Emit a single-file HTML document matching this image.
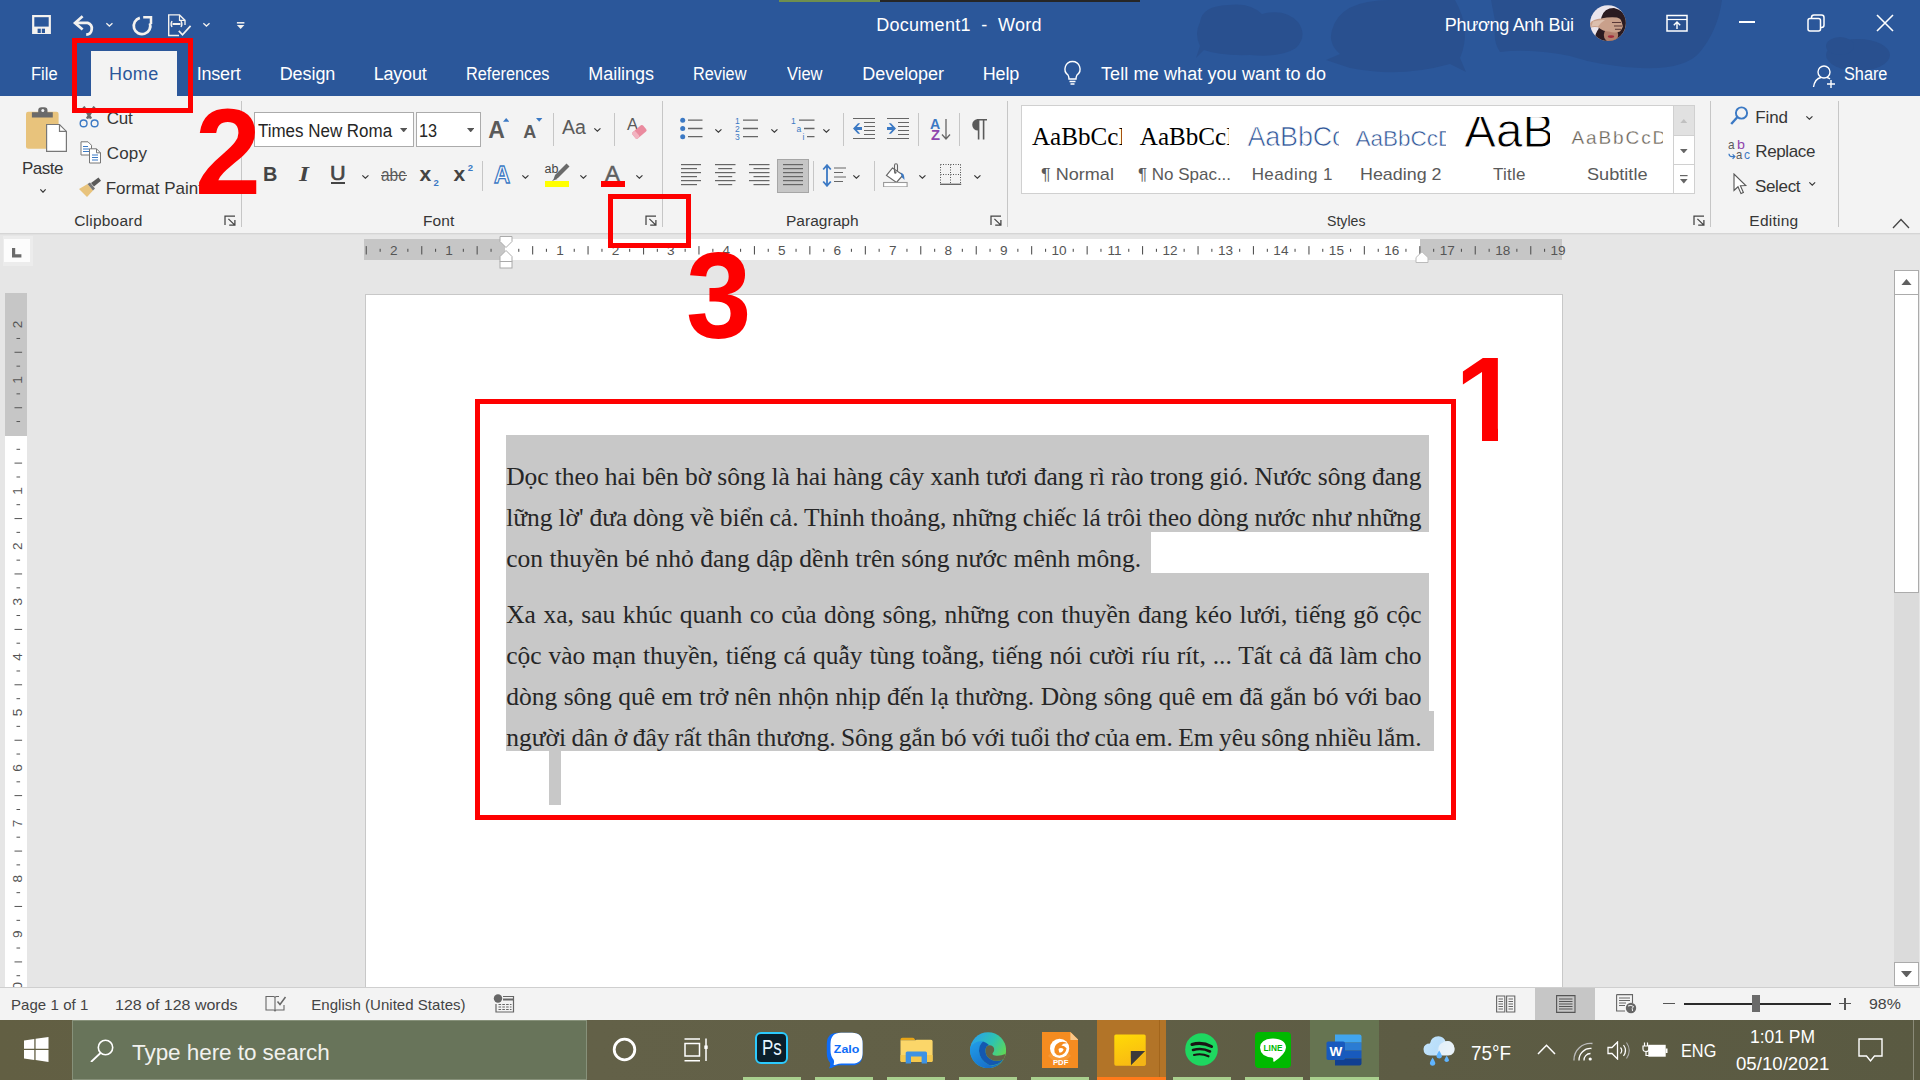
<!DOCTYPE html>
<html lang="vi"><head><meta charset="utf-8"><title>Document1 - Word</title><style>
html,body{margin:0;padding:0;}
body{width:1920px;height:1080px;overflow:hidden;position:relative;background:#e6e6e6;font-family:"Liberation Sans", sans-serif;}
.b{position:absolute;box-sizing:border-box;}
.t{position:absolute;white-space:pre;line-height:1;transform-origin:0 0;}
.p{position:absolute;white-space:pre;font-family:"Liberation Serif", serif;color:#262626;}
</style></head><body>
<!-- title bar --><div class="b" style="left:0.0px;top:0.0px;width:1920.0px;height:96.0px;background:#2b579a;"></div><svg class="b" style="left:1100.0px;top:0.0px;" width="820" height="96" viewBox="0 0 820 96"><g fill="#29508f">
<path d="M100 22 Q102 6 128 5 Q150 2 162 14 Q185 8 198 22 Q208 36 196 48 Q180 58 150 55 Q120 56 104 50 L96 58 L100 46 Q94 34 100 22Z"/>
<path d="M232 30 Q240 0 290 0 H355 Q372 30 360 58 L366 72 L350 64 Q300 78 250 68 L226 60 L240 54 Q228 44 232 30Z"/>
<path d="M391 0 H622 Q618 30 600 52 Q585 70 540 68 Q500 66 470 56 Q430 48 400 52 Q392 40 396 26Z"/>
<ellipse cx="758" cy="55" rx="32" ry="16"/><ellipse cx="740" cy="46" rx="14" ry="9"/></g></svg><div class="b" style="left:779.0px;top:0.0px;width:101.0px;height:2.0px;background:#6f8f4e;"></div><div class="b" style="left:880.0px;top:0.0px;width:260.0px;height:2.0px;background:#262626;"></div><svg class="b" style="left:31.0px;top:14.0px;" width="21" height="21" viewBox="0 0 21 21"><rect x="2.2" y="2.1" width="16.6" height="16.8" fill="none" stroke="#f4f2ef" stroke-width="2.2"/><rect x="2.2" y="12.6" width="16.6" height="6.3" fill="#f4f2ef"/><rect x="6.6" y="14.7" width="3.2" height="4.3" fill="#2b579a"/><rect x="10.8" y="14.7" width="3.2" height="4.3" fill="#2b579a"/></svg><svg class="b" style="left:72.0px;top:13.0px;" width="26" height="24" viewBox="0 0 26 24"><path d="M10.6 3.2 L3 9.9 L10.6 16.6" fill="none" stroke="#f4f2ef" stroke-width="2.7"/><path d="M3.8 9.9 H15.6 A6 6 0 0 1 14.2 21.6" fill="none" stroke="#f4f2ef" stroke-width="2.7"/></svg><svg class="b" style="left:105.3px;top:22.0px;" width="8.8" height="5.4" viewBox="0 0 8.8 5.4"><path d="M1.35 1.35 L4.40 4.05 L7.45 1.35" fill="none" stroke="#f4f2ef" stroke-width="1.3"/></svg><svg class="b" style="left:130.0px;top:13.0px;" width="24" height="24" viewBox="0 0 24 24"><path d="M9.85 4.9 A8.3 8.3 0 1 0 19.9 10.2" fill="none" stroke="#f4f2ef" stroke-width="2.7"/><path d="M13.2 4.2 H21 V11" fill="none" stroke="#f4f2ef" stroke-width="2.5"/></svg><svg class="b" style="left:167.0px;top:13.0px;" width="26" height="24" viewBox="0 0 26 24"><path d="M12 22.5 H1.7 V1.9 H12.5 L18 7.4 V12" fill="none" stroke="#f4f2ef" stroke-width="1.4"/><path d="M12.5 1.9 V7.4 H18" fill="none" stroke="#f4f2ef" stroke-width="1.2"/><path d="M5.5 11 H13.5" stroke="#f4f2ef" stroke-width="2"/><path d="M5 8 Q3.2 11 5 14 M14 8 Q15.8 11 14 14" stroke="#f4f2ef" stroke-width="1.4" fill="none"/><path d="M11.8 17.9 L15.5 21.8 L23.6 12.9" fill="none" stroke="#f4f2ef" stroke-width="1.7"/></svg><svg class="b" style="left:201.5px;top:22.0px;" width="8.9" height="5.4" viewBox="0 0 8.9 5.4"><path d="M1.35 1.35 L4.45 4.05 L7.55 1.35" fill="none" stroke="#f4f2ef" stroke-width="1.3"/></svg><svg class="b" style="left:236.0px;top:21.0px;" width="10" height="10" viewBox="0 0 10 10"><path d="M0.9 1.8H8.4" stroke="#f4f2ef" stroke-width="1.5"/><path d="M0.9 4 H8.4 L4.65 8Z" fill="#f4f2ef"/></svg><span class="t" id="t0" style="left:876.3px;top:16.0px;font-size:18.0px;color:#fff;letter-spacing:0.26px;">Document1  -  Word</span><span class="t" id="t1" style="left:1444.7px;top:15.7px;font-size:18.0px;color:#fff;letter-spacing:-0.28px;">Phương Anh Bùi</span><svg class="b" style="left:1589.9px;top:4.9px;" width="36" height="36.2" viewBox="0 0 36 36.2"><defs><clipPath id="av"><circle cx="18" cy="18.1" r="17.9"/></clipPath></defs>
<g clip-path="url(#av)"><rect width="36" height="37" fill="#ebe5ec"/>
<path d="M11.5 12 Q14 3 24 3 Q37 6 37 20 Q37 32 28 37 H5 Q4 30 8.5 24 Q10.5 16 11.5 12Z" fill="#2b1b21"/>
<ellipse cx="21" cy="30" rx="7.2" ry="7.5" fill="#b3806d"/><ellipse cx="21" cy="31.6" rx="3.2" ry="1.3" fill="#a32b3c"/>
<path d="M0 18 Q3 14.5 11 13.6 Q20 11.5 27 12.5 Q31 13.5 31.5 16.5 L33 21.5 Q32 24 30 26.5 Q25 28.5 19 26.5 Q13 26.5 8 22.3 Q3 21.5 0 23Z" fill="#c9a08b"/>
<path d="M3 16.5 Q9 14.5 15 15 Q10 18 8 21.5 Q4 20.5 1 22Z" fill="#dcbfae"/>
<path d="M22 17.5 H31 M24 21 H32.5 M25 24.3 H31" stroke="#4a2a2c" stroke-width="0.9" fill="none"/></g></svg><svg class="b" style="left:1666.0px;top:14.0px;" width="22" height="18" viewBox="0 0 22 18"><rect x="1" y="1.5" width="20" height="15.5" fill="none" stroke="#fff" stroke-width="1.5"/><path d="M1 5.5H21" stroke="#fff" stroke-width="1.2"/><path d="M11 15V8.5 M7.8 11.3 L11 8 L14.2 11.3" fill="none" stroke="#fff" stroke-width="1.4"/></svg><div class="b" style="left:1739.0px;top:21.3px;width:16.0px;height:1.6px;background:#fff;"></div><svg class="b" style="left:1807.0px;top:14.0px;" width="18" height="18" viewBox="0 0 18 18"><rect x="1" y="4.5" width="12.5" height="12.5" rx="2" fill="none" stroke="#fff" stroke-width="1.5"/><path d="M4.5 4.5 V3.5 Q4.5 1 7 1 H14.5 Q17 1 17 3.5 V11 Q17 13.5 14.5 13.5 H13.5" fill="none" stroke="#fff" stroke-width="1.5"/></svg><svg class="b" style="left:1876.0px;top:14.0px;" width="18" height="18" viewBox="0 0 18 18"><path d="M1 1 L17 17 M17 1 L1 17" stroke="#fff" stroke-width="1.6"/></svg><!-- tabs --><div class="b" style="left:91.0px;top:51.0px;width:86.0px;height:46.0px;background:#f3f3f3;"></div><span class="t" id="t2" style="left:30.8px;top:65.0px;font-size:18.0px;color:#fff;transform:scaleX(0.915);">File</span><span class="t" id="t3" style="left:109.0px;top:65.0px;font-size:18.0px;color:#2b579a;letter-spacing:0.43px;">Home</span><span class="t" id="t4" style="left:196.7px;top:65.0px;font-size:18.0px;color:#fff;letter-spacing:-0.20px;">Insert</span><span class="t" id="t5" style="left:279.7px;top:65.0px;font-size:18.0px;color:#fff;letter-spacing:-0.08px;">Design</span><span class="t" id="t6" style="left:373.7px;top:65.0px;font-size:18.0px;color:#fff;letter-spacing:-0.21px;">Layout</span><span class="t" id="t7" style="left:465.8px;top:65.0px;font-size:18.0px;color:#fff;transform:scaleX(0.907);">References</span><span class="t" id="t8" style="left:588.3px;top:65.0px;font-size:18.0px;color:#fff;letter-spacing:-0.05px;">Mailings</span><span class="t" id="t9" style="left:693.4px;top:65.0px;font-size:18.0px;color:#fff;transform:scaleX(0.905);">Review</span><span class="t" id="t10" style="left:787.3px;top:65.0px;font-size:18.0px;color:#fff;transform:scaleX(0.917);">View</span><span class="t" id="t11" style="left:862.3px;top:65.0px;font-size:18.0px;color:#fff;letter-spacing:-0.04px;">Developer</span><span class="t" id="t12" style="left:982.7px;top:65.0px;font-size:18.0px;color:#fff;letter-spacing:-0.14px;">Help</span><svg class="b" style="left:1062.0px;top:60.0px;" width="21" height="26" viewBox="0 0 21 26"><path d="M10.5 1.5 A7.5 7.5 0 0 1 15 15 Q14 17 14 19 H7 Q7 17 6 15 A7.5 7.5 0 0 1 10.5 1.5Z" fill="none" stroke="#fff" stroke-width="1.4"/><path d="M7.5 21.5H13.5 M8.5 24H12.5" stroke="#fff" stroke-width="1.3"/></svg><span class="t" id="t13" style="left:1101.0px;top:65.0px;font-size:18.0px;color:#fff;letter-spacing:0.11px;">Tell me what you want to do</span><svg class="b" style="left:1812.0px;top:64.0px;" width="26" height="24" viewBox="0 0 26 24"><circle cx="12" cy="8" r="6" fill="none" stroke="#fff" stroke-width="1.4"/><path d="M1.5 23 Q3 14.5 9 13.5 M15 13.5 Q17 14 18 15" fill="none" stroke="#fff" stroke-width="1.4"/><path d="M19 16V24 M15 20H23" stroke="#fff" stroke-width="1.4"/></svg><span class="t" id="t14" style="left:1844.3px;top:65.0px;font-size:18.0px;color:#fff;transform:scaleX(0.904);">Share</span><!-- ribbon --><div class="b" style="left:0.0px;top:96.0px;width:1920.0px;height:137.0px;background:#f3f3f3;"></div><div class="b" style="left:0.0px;top:233.0px;width:1920.0px;height:1.0px;background:#d5d5d5;"></div><div class="b" style="left:0.0px;top:234.0px;width:1920.0px;height:1.0px;background:#e0e0e0;"></div><svg class="b" style="left:25.0px;top:106.0px;" width="43" height="47" viewBox="0 0 43 47"><rect x="1" y="5.7" width="32.6" height="37" rx="2.2" fill="#e8c37c"/>
<path d="M6.9 6.2 H13.2 V4.6 A3.3 3.3 0 0 1 16.5 1.3 H19.2 A3.3 3.3 0 0 1 22.5 4.6 V6.2 H27.8 V11.6 H6.9Z" fill="#6a6a6a"/><circle cx="17.8" cy="4.5" r="1.5" fill="#f3f3f3"/>
<path d="M21.6 18.5 H34.5 L41.4 25.4 V45.3 H21.6Z" fill="#fff" stroke="#777" stroke-width="1.2"/><path d="M34.5 18.5 V25.4 H41.4" fill="none" stroke="#777" stroke-width="1.2"/></svg><span class="t" id="t15" style="left:22.0px;top:159.5px;font-size:17.0px;color:#363636;letter-spacing:-0.50px;">Paste</span><svg class="b" style="left:39.0px;top:187.8px;" width="8" height="5.6" viewBox="0 0 8 5.6"><path d="M1.35 1.35 L4.00 4.25 L6.65 1.35" fill="none" stroke="#363636" stroke-width="1.15"/></svg><svg class="b" style="left:78.0px;top:104.0px;" width="22" height="24" viewBox="0 0 22 24"><path d="M5.6 2.6 L13 14.6 M16.4 2.6 L9 14.6" stroke="#6a6a6a" stroke-width="2.6"/>
<circle cx="5.6" cy="19.4" r="3.4" fill="none" stroke="#3b79c4" stroke-width="1.4"/><circle cx="16.6" cy="19.4" r="3.4" fill="none" stroke="#3b79c4" stroke-width="1.4"/></svg><span class="t" id="t16" style="left:106.7px;top:110.3px;font-size:17.0px;color:#363636;letter-spacing:-0.22px;">Cut</span><svg class="b" style="left:79.5px;top:141.0px;" width="22" height="23" viewBox="0 0 22 23"><path d="M1 0.8 H8 L11.5 4.3 V14 H1Z" fill="#fff" stroke="#777" stroke-width="1"/><path d="M3 5.5H8 M3 8H9.5 M3 10.5H9.5" stroke="#3b79c4" stroke-width="1"/>
<path d="M9.5 7.8 H16.5 L20.5 11.8 V22 H9.5Z" fill="#fff" stroke="#777" stroke-width="1"/><path d="M16.5 7.8V11.8H20.5" fill="none" stroke="#777" stroke-width="1"/><path d="M12 14H18 M12 16.5H18 M12 19H18" stroke="#3b79c4" stroke-width="1"/></svg><span class="t" id="t17" style="left:106.7px;top:145.3px;font-size:17.0px;color:#363636;letter-spacing:0.20px;">Copy</span><svg class="b" style="left:78.0px;top:176.0px;" width="24" height="22" viewBox="0 0 24 22"><path d="M1 13 L9.5 8 L15 14.5 L9 21 Z" fill="#e8c37c"/><path d="M9.5 8 L15 14.5 L17 12.5 L12 6.5Z" fill="#777"/><path d="M13 7 L20.5 1.5 L23 4.8 L16 10.5Z" fill="#5a5a5a"/></svg><span class="t" id="t18" style="left:105.7px;top:180.3px;font-size:17.0px;color:#363636;">Format Painter</span><span class="t" id="t19" style="left:74.2px;top:213.0px;font-size:15.5px;color:#363636;letter-spacing:0.22px;">Clipboard</span><svg class="b" style="left:223.8px;top:215.4px;" width="12" height="11.5" viewBox="0 0 12 11.5"><path d="M1 10 V1.1 H11 M4.4 3.9 L10.6 9.9 M5.2 10 H10.9 V5" fill="none" stroke="#444" stroke-width="1.25"/></svg><div class="b" style="left:241.0px;top:101.0px;width:1.0px;height:126.0px;background:#c6c6c6;"></div><div class="b" style="left:254.0px;top:112.0px;width:159.5px;height:34.5px;background:#fff;border:1px solid #ababab;"></div><span class="t" id="t20" style="left:257.9px;top:122.2px;font-size:18.0px;color:#262626;transform:scaleX(0.942);">Times New Roma</span><svg class="b" style="left:400.0px;top:128.0px;" width="7.4" height="4.4" viewBox="0 0 7.4 4.4"><path d="M0 0H7.4L3.7 4.4Z" fill="#555"/></svg><div class="b" style="left:416.0px;top:112.0px;width:64.7px;height:34.5px;background:#fff;border:1px solid #ababab;"></div><span class="t" id="t21" style="left:419.4px;top:122.2px;font-size:18.0px;color:#262626;transform:scaleX(0.905);">13</span><svg class="b" style="left:466.6px;top:128.0px;" width="7.4" height="4.4" viewBox="0 0 7.4 4.4"><path d="M0 0H7.4L3.7 4.4Z" fill="#555"/></svg><span class="t" id="t22" style="left:488.3px;top:118.7px;font-size:23.0px;color:#5a5a5a;font-weight:700;-webkit-text-stroke:0;">A</span><svg class="b" style="left:502.6px;top:117.8px;" width="6.4" height="3.8" viewBox="0 0 6.4 3.8"><path d="M0 3.8H6.4L3.2 0Z" fill="#3b79c4"/></svg><span class="t" id="t23" style="left:523.3px;top:122.7px;font-size:18.0px;color:#5a5a5a;font-weight:700;">A</span><svg class="b" style="left:536.2px;top:117.8px;" width="6.4" height="3.8" viewBox="0 0 6.4 3.8"><path d="M0 0H6.4L3.2 3.8Z" fill="#3b79c4"/></svg><div class="b" style="left:553.0px;top:113.0px;width:1.0px;height:33.0px;background:#c6c6c6;"></div><span class="t" id="t24" style="left:562.0px;top:118.3px;font-size:19.5px;color:#5a5a5a;">Aa</span><svg class="b" style="left:592.6px;top:127.0px;" width="8.8" height="5.6" viewBox="0 0 8.8 5.6"><path d="M1.35 1.35 L4.40 4.25 L7.45 1.35" fill="none" stroke="#363636" stroke-width="1.15"/></svg><div class="b" style="left:614.0px;top:113.0px;width:1.0px;height:33.0px;background:#c6c6c6;"></div><span class="t" id="t25" style="left:627.0px;top:116.4px;font-size:16.5px;color:#5a5a5a;">A</span><svg class="b" style="left:630.0px;top:123.0px;" width="18" height="17" viewBox="0 0 18 17"><g transform="rotate(-40 9 8.5)"><rect x="2" y="5" width="14" height="8" rx="1.6" fill="#ea8a9e"/><rect x="2" y="5" width="4.5" height="8" rx="1.6" fill="#f2b3c0"/></g></svg><span class="t" id="t26" style="left:262.7px;top:164.2px;font-size:20.5px;color:#444;font-weight:700;transform:scaleX(0.969);">B</span><span class="t" id="t27" style="left:298.5px;top:164.2px;font-size:21.5px;color:#444;font-family:'Liberation Serif',serif;font-weight:700;font-style:italic;transform:scaleX(1.190);">I</span><span class="t" id="t28" style="left:329.9px;top:164.2px;font-size:19.5px;color:#444;transform:scaleX(1.108);-webkit-text-stroke:0.6px #444;">U</span><div class="b" style="left:330.8px;top:182.4px;width:13.8px;height:1.9px;background:#444;"></div><svg class="b" style="left:360.5px;top:173.6px;" width="8.8" height="5.6" viewBox="0 0 8.8 5.6"><path d="M1.35 1.35 L4.40 4.25 L7.45 1.35" fill="none" stroke="#363636" stroke-width="1.15"/></svg><span class="t" id="t29" style="left:381.2px;top:167.0px;font-size:17.5px;color:#5a5a5a;transform:scaleX(0.882);">abc</span><div class="b" style="left:380.5px;top:175.2px;width:26.5px;height:1.2px;background:#5a5a5a;"></div><span class="t" id="t30" style="left:419.6px;top:163.2px;font-size:21.0px;color:#444;font-weight:700;">x</span><span class="t" id="t31" style="left:433.4px;top:177.6px;font-size:9.5px;color:#3b79c4;font-weight:700;">2</span><span class="t" id="t32" style="left:453.6px;top:163.2px;font-size:21.0px;color:#444;font-weight:700;">x</span><span class="t" id="t33" style="left:467.8px;top:162.6px;font-size:9.5px;color:#3b79c4;font-weight:700;">2</span><div class="b" style="left:482.0px;top:161.0px;width:1.0px;height:30.0px;background:#c6c6c6;"></div><span class="t" id="t34" style="left:494.3px;top:162.6px;font-size:24.5px;color:#fbfbfb;transform:scaleX(0.911);-webkit-text-stroke:1.3px #3b79c4;font-weight:700;">A</span><svg class="b" style="left:521.3px;top:173.6px;" width="8.8" height="5.6" viewBox="0 0 8.8 5.6"><path d="M1.35 1.35 L4.40 4.25 L7.45 1.35" fill="none" stroke="#363636" stroke-width="1.15"/></svg><span class="t" id="t35" style="left:544.5px;top:162.5px;font-size:12.5px;color:#444;">ab</span><svg class="b" style="left:548.0px;top:160.0px;" width="22" height="22" viewBox="0 0 22 22"><path d="M18.5 3.5 L21.5 6.5 L10 18 L5.5 19.5 L7 15Z" fill="#6a6a6a"/><path d="M4 21 L7.5 17 L9.5 19Z" fill="#6a6a6a"/></svg><div class="b" style="left:544.8px;top:181.0px;width:24.2px;height:5.9px;background:#ffff00;"></div><svg class="b" style="left:579.3px;top:173.6px;" width="8.8" height="5.6" viewBox="0 0 8.8 5.6"><path d="M1.35 1.35 L4.40 4.25 L7.45 1.35" fill="none" stroke="#363636" stroke-width="1.15"/></svg><span class="t" id="t36" style="left:605.0px;top:163.2px;font-size:22.5px;color:#5f5f5f;transform:scaleX(0.987);-webkit-text-stroke:0.5px #5f5f5f;">A</span><div class="b" style="left:600.9px;top:181.0px;width:24.1px;height:5.9px;background:#ff0000;"></div><svg class="b" style="left:635.4px;top:173.6px;" width="8.8" height="5.6" viewBox="0 0 8.8 5.6"><path d="M1.35 1.35 L4.40 4.25 L7.45 1.35" fill="none" stroke="#363636" stroke-width="1.15"/></svg><span class="t" id="t37" style="left:423.0px;top:213.2px;font-size:15.5px;color:#363636;letter-spacing:0.10px;">Font</span><svg class="b" style="left:644.5px;top:215.4px;" width="12" height="11.5" viewBox="0 0 12 11.5"><path d="M1 10 V1.1 H11 M4.4 3.9 L10.6 9.9 M5.2 10 H10.9 V5" fill="none" stroke="#444" stroke-width="1.25"/></svg><div class="b" style="left:662.0px;top:101.0px;width:1.0px;height:126.0px;background:#c6c6c6;"></div><svg class="b" style="left:679.5px;top:117.0px;" width="23" height="23" viewBox="0 0 23 23"><circle cx="2.7" cy="3.2" r="2.5" fill="#3b79c4"/><circle cx="2.7" cy="11.5" r="2.5" fill="#3b79c4"/><circle cx="2.7" cy="19.7" r="2.5" fill="#3b79c4"/>
<path d="M8 3.2H22.5 M8 11.5H22.5 M8 19.7H22.5" stroke="#666" stroke-width="1.3"/></svg><svg class="b" style="left:713.6px;top:127.8px;" width="8.8" height="5.6" viewBox="0 0 8.8 5.6"><path d="M1.35 1.35 L4.40 4.25 L7.45 1.35" fill="none" stroke="#363636" stroke-width="1.15"/></svg><svg class="b" style="left:735.0px;top:116.0px;" width="24" height="25" viewBox="0 0 24 25"><text x="0" y="7.5" font-size="8.5" font-family="Liberation Sans, sans-serif" fill="#3b79c4">1</text><text x="0" y="16" font-size="8.5" font-family="Liberation Sans, sans-serif" fill="#3b79c4">2</text><text x="0" y="24.3" font-size="8.5" font-family="Liberation Sans, sans-serif" fill="#3b79c4">3</text>
<path d="M8 4.2H23 M8 12.5H23 M8 20.7H23" stroke="#666" stroke-width="1.3"/></svg><svg class="b" style="left:769.7px;top:127.8px;" width="8.8" height="5.6" viewBox="0 0 8.8 5.6"><path d="M1.35 1.35 L4.40 4.25 L7.45 1.35" fill="none" stroke="#363636" stroke-width="1.15"/></svg><svg class="b" style="left:790.5px;top:116.0px;" width="25" height="25" viewBox="0 0 25 25"><text x="0" y="7.5" font-size="8.5" font-family="Liberation Sans, sans-serif" fill="#3b79c4">1</text><text x="5.5" y="16" font-size="8.5" font-family="Liberation Sans, sans-serif" fill="#3b79c4">a</text><text x="11.5" y="24.3" font-size="8.5" font-family="Liberation Sans, sans-serif" fill="#3b79c4">i</text>
<path d="M8 4.2H23.5 M13 12.5H23.5 M16 20.7H23.5" stroke="#666" stroke-width="1.3"/></svg><svg class="b" style="left:821.7px;top:127.8px;" width="8.8" height="5.6" viewBox="0 0 8.8 5.6"><path d="M1.35 1.35 L4.40 4.25 L7.45 1.35" fill="none" stroke="#363636" stroke-width="1.15"/></svg><div class="b" style="left:843.0px;top:113.0px;width:1.0px;height:33.0px;background:#c6c6c6;"></div><svg class="b" style="left:853.0px;top:118.0px;" width="23" height="21" viewBox="0 0 23 21"><path d="M0 0.5H22 M11 4.5H22 M11 8.5H22 M11 12.5H22 M11 16.5H22 M0 20.5H22" stroke="#666" stroke-width="1"/>
<path d="M0 10.5 L5 5.2 H7.2 L3.9 9 H9 V12 H3.9 L7.2 15.8 H5Z" fill="#3b79c4"/></svg><svg class="b" style="left:887.0px;top:118.0px;" width="23" height="21" viewBox="0 0 23 21"><path d="M0 0.5H22 M11 4.5H22 M11 8.5H22 M11 12.5H22 M11 16.5H22 M0 20.5H22" stroke="#666" stroke-width="1"/>
<path d="M9 10.5 L4 5.2 H1.8 L5.1 9 H0 V12 H5.1 L1.8 15.8 H4Z" fill="#3b79c4"/></svg><div class="b" style="left:918.0px;top:113.0px;width:1.0px;height:33.0px;background:#c6c6c6;"></div><span class="t" id="t38" style="left:930.2px;top:116.5px;font-size:14.4px;color:#3b79c4;font-weight:700;transform:scaleX(0.982);">A</span><span class="t" id="t39" style="left:931.0px;top:127.6px;font-size:14.4px;color:#8e44ad;font-weight:700;transform:scaleX(1.022);">Z</span><svg class="b" style="left:941.0px;top:118.5px;" width="10" height="21.5" viewBox="0 0 10 21.5"><path d="M5 0V20 M1 15.5 L5 20 L9 15.5" fill="none" stroke="#666" stroke-width="1.3"/></svg><div class="b" style="left:959.0px;top:113.0px;width:1.0px;height:33.0px;background:#c6c6c6;"></div><svg class="b" style="left:969.5px;top:118.5px;" width="17.5" height="21" viewBox="0 0 17.5 21"><path d="M8 0 A5.8 5.8 0 0 0 8 11.6 Z" fill="#5a5a5a"/><path d="M7 0.8H17 M8.6 0.8V20.5 M13.6 0.8V20.5" stroke="#5a5a5a" stroke-width="1.6" fill="none"/></svg><svg class="b" style="left:680.7px;top:164.0px;" width="20.5" height="24" viewBox="0 0 20.5 24"><rect x="0.0" y="0.0" width="20.5" height="1.2" fill="#666"/><rect x="0.0" y="4.0" width="16.0" height="1.2" fill="#666"/><rect x="0.0" y="8.0" width="20.5" height="1.2" fill="#666"/><rect x="0.0" y="12.0" width="16.0" height="1.2" fill="#666"/><rect x="0.0" y="16.0" width="20.5" height="1.2" fill="#666"/><rect x="0.0" y="20.0" width="16.0" height="1.2" fill="#666"/></svg><svg class="b" style="left:715.0px;top:164.0px;" width="20.5" height="24" viewBox="0 0 20.5 24"><rect x="0.0" y="0.0" width="20.5" height="1.2" fill="#666"/><rect x="3.2" y="4.0" width="14.0" height="1.2" fill="#666"/><rect x="0.0" y="8.0" width="20.5" height="1.2" fill="#666"/><rect x="3.2" y="12.0" width="14.0" height="1.2" fill="#666"/><rect x="0.0" y="16.0" width="20.5" height="1.2" fill="#666"/><rect x="3.2" y="20.0" width="14.0" height="1.2" fill="#666"/></svg><svg class="b" style="left:749.0px;top:164.0px;" width="20.5" height="24" viewBox="0 0 20.5 24"><rect x="0.0" y="0.0" width="20.5" height="1.2" fill="#666"/><rect x="4.5" y="4.0" width="16.0" height="1.2" fill="#666"/><rect x="0.0" y="8.0" width="20.5" height="1.2" fill="#666"/><rect x="4.5" y="12.0" width="16.0" height="1.2" fill="#666"/><rect x="0.0" y="16.0" width="20.5" height="1.2" fill="#666"/><rect x="4.5" y="20.0" width="16.0" height="1.2" fill="#666"/></svg><div class="b" style="left:777.0px;top:159.0px;width:32.0px;height:34.0px;background:#c6c6c6;border:1px solid #a6a6a6;"></div><svg class="b" style="left:782.6px;top:164.0px;" width="20.7" height="24" viewBox="0 0 20.7 24"><rect x="0.0" y="0.0" width="20.7" height="1.2" fill="#666"/><rect x="0.0" y="4.0" width="20.7" height="1.2" fill="#666"/><rect x="0.0" y="8.0" width="20.7" height="1.2" fill="#666"/><rect x="0.0" y="12.0" width="20.7" height="1.2" fill="#666"/><rect x="0.0" y="16.0" width="20.7" height="1.2" fill="#666"/><rect x="0.0" y="20.0" width="20.7" height="1.2" fill="#666"/></svg><div class="b" style="left:813.0px;top:161.0px;width:1.0px;height:30.0px;background:#c6c6c6;"></div><svg class="b" style="left:821.5px;top:163.5px;" width="25" height="23" viewBox="0 0 25 23"><path d="M5 1.5V21.5 M1.2 5.5 L5 1.2 L8.8 5.5 M1.2 17.5 L5 21.8 L8.8 17.5" fill="none" stroke="#3b79c4" stroke-width="1.8"/>
<path d="M12 4H24 M12 8.5H21 M12 13H24 M12 17.5H21" stroke="#666" stroke-width="1.2"/></svg><svg class="b" style="left:852.4px;top:173.6px;" width="8.8" height="5.6" viewBox="0 0 8.8 5.6"><path d="M1.35 1.35 L4.40 4.25 L7.45 1.35" fill="none" stroke="#363636" stroke-width="1.15"/></svg><div class="b" style="left:874.0px;top:161.0px;width:1.0px;height:30.0px;background:#c6c6c6;"></div><svg class="b" style="left:883.0px;top:162.5px;" width="25" height="24.5" viewBox="0 0 25 24.5"><path d="M9.5 5 L20 12 L13.5 19.5 L3.5 12.5Z" fill="#fff" stroke="#666" stroke-width="1.2"/><path d="M11.5 9 V2.5 Q11.5 0.8 13 0.8 Q14.5 0.8 14.5 2.5 V8" fill="none" stroke="#666" stroke-width="1.1"/><circle cx="12.3" cy="9.5" r="1.2" fill="#666"/>
<path d="M17.5 9.5 Q21.5 10 21.5 17 Q20 15 19 14.5Z" fill="#3b79c4"/><rect x="0.6" y="19.5" width="23.5" height="4.4" fill="#fff" stroke="#999" stroke-width="1.1"/></svg><svg class="b" style="left:917.5px;top:173.6px;" width="8.8" height="5.6" viewBox="0 0 8.8 5.6"><path d="M1.35 1.35 L4.40 4.25 L7.45 1.35" fill="none" stroke="#363636" stroke-width="1.15"/></svg><svg class="b" style="left:940.0px;top:164.0px;" width="22" height="21.5" viewBox="0 0 22 21.5"><path d="M0.5 0.5H21 M0.5 10.5H21 M0.5 0.5V20 M10.5 0.5V20 M20.5 0.5V20" fill="none" stroke="#555" stroke-width="1" stroke-dasharray="1 1.5"/><path d="M0 20.3H21.2" stroke="#666" stroke-width="1.4"/></svg><svg class="b" style="left:973.4px;top:173.6px;" width="8.8" height="5.6" viewBox="0 0 8.8 5.6"><path d="M1.35 1.35 L4.40 4.25 L7.45 1.35" fill="none" stroke="#363636" stroke-width="1.15"/></svg><span class="t" id="t40" style="left:786.0px;top:213.0px;font-size:15.5px;color:#363636;letter-spacing:0.03px;">Paragraph</span><svg class="b" style="left:989.7px;top:215.4px;" width="12" height="11.5" viewBox="0 0 12 11.5"><path d="M1 10 V1.1 H11 M4.4 3.9 L10.6 9.9 M5.2 10 H10.9 V5" fill="none" stroke="#444" stroke-width="1.25"/></svg><div class="b" style="left:1007.0px;top:101.0px;width:1.0px;height:126.0px;background:#c6c6c6;"></div><div class="b" style="left:1021.3px;top:104.5px;width:673.5px;height:89.8px;background:#fff;border:1px solid #d0d0d0;"></div><div class="b" style="left:1028px;top:110px;width:93.5px;height:50px;overflow:hidden;"><span class="t" id="t41" style="left:4.0px;top:13.6px;font-size:25.1px;color:#000;font-family:'Liberation Serif',serif;">AaBbCcDd</span></div><div class="b" style="left:1135.8px;top:110px;width:93.5px;height:50px;overflow:hidden;"><span class="t" id="t42" style="left:4.0px;top:13.6px;font-size:25.1px;color:#000;font-family:'Liberation Serif',serif;">AaBbCcDd</span></div><span class="t" id="t43" style="left:1040.6px;top:166.1px;font-size:17.0px;color:#5a5a5a;transform:scaleX(1.062);">¶ Normal</span><span class="t" id="t44" style="left:1138.0px;top:166.1px;font-size:17.0px;color:#5a5a5a;letter-spacing:-0.02px;">¶ No Spac...</span><div class="b" style="left:1246px;top:110px;width:92.5px;height:50px;overflow:hidden;"><span class="t" id="t45" style="left:1.5px;top:14.0px;font-size:27.0px;color:#2f5597;letter-spacing:-0.2px;-webkit-text-stroke:0.7px #fff;">AaBbCcD</span></div><span class="t" id="t46" style="left:1251.7px;top:166.1px;font-size:17.0px;color:#5a5a5a;letter-spacing:0.41px;">Heading 1</span><div class="b" style="left:1354px;top:110px;width:92px;height:50px;overflow:hidden;"><span class="t" id="t47" style="left:1.5px;top:18.0px;font-size:22.5px;color:#2f5597;-webkit-text-stroke:0.5px #fff;">AaBbCcDd</span></div><span class="t" id="t48" style="left:1359.9px;top:166.1px;font-size:17.0px;color:#5a5a5a;transform:scaleX(1.052);">Heading 2</span><div class="b" style="left:1460px;top:116.5px;width:89.5px;height:40px;overflow:hidden;"><span class="t" id="t49" style="left:4.3px;top:-9.2px;font-size:47.5px;color:#000;-webkit-text-stroke:0.9px #fff;">AaBb</span></div><span class="t" id="t50" style="left:1493.0px;top:165.8px;font-size:17.0px;color:#5a5a5a;letter-spacing:0.24px;">Title</span><div class="b" style="left:1568px;top:110px;width:95px;height:50px;overflow:hidden;"><span class="t" id="t51" style="left:3.5px;top:17.5px;font-size:19.0px;color:#6a6358;letter-spacing:1.9px;-webkit-text-stroke:0.3px #fff;">AaBbCcDd</span></div><span class="t" id="t52" style="left:1587.0px;top:165.8px;font-size:17.0px;color:#5a5a5a;transform:scaleX(1.067);">Subtitle</span><div class="b" style="left:1672.5px;top:104.5px;width:22.3px;height:31.5px;background:#e1e1e1;border:1px solid #d0d0d0;"></div><div class="b" style="left:1672.5px;top:135.0px;width:22.3px;height:30.0px;background:#fff;border:1px solid #d0d0d0;"></div><div class="b" style="left:1672.5px;top:164.0px;width:22.3px;height:30.3px;background:#fff;border:1px solid #d0d0d0;"></div><svg class="b" style="left:1680.0px;top:118.5px;" width="7.6" height="4.4" viewBox="0 0 7.6 4.4"><path d="M0 4.4H7.6L3.8 0Z" fill="#c0c0c0"/></svg><svg class="b" style="left:1680.0px;top:148.5px;" width="7.6" height="4.4" viewBox="0 0 7.6 4.4"><path d="M0 0H7.6L3.8 4.4Z" fill="#666"/></svg><svg class="b" style="left:1680.0px;top:174.5px;" width="7.6" height="9" viewBox="0 0 7.6 9"><path d="M0 0.6H7.6" stroke="#666" stroke-width="1.2"/><path d="M0 4H7.6L3.8 8.4Z" fill="#666"/></svg><span class="t" id="t53" style="left:1327.3px;top:213.0px;font-size:15.5px;color:#363636;transform:scaleX(0.911);">Styles</span><svg class="b" style="left:1692.5px;top:215.4px;" width="12" height="11.5" viewBox="0 0 12 11.5"><path d="M1 10 V1.1 H11 M4.4 3.9 L10.6 9.9 M5.2 10 H10.9 V5" fill="none" stroke="#444" stroke-width="1.25"/></svg><div class="b" style="left:1710.0px;top:101.0px;width:1.0px;height:126.0px;background:#c6c6c6;"></div><svg class="b" style="left:1729.5px;top:105.5px;" width="19" height="20" viewBox="0 0 19 20"><circle cx="11.5" cy="7" r="5.6" fill="none" stroke="#3b79c4" stroke-width="1.9"/><path d="M7.5 11 L1.2 18" stroke="#3b79c4" stroke-width="2.4"/></svg><span class="t" id="t54" style="left:1755.3px;top:109.0px;font-size:17.0px;color:#363636;letter-spacing:-0.14px;">Find</span><svg class="b" style="left:1804.5px;top:114.6px;" width="8.8" height="5.6" viewBox="0 0 8.8 5.6"><path d="M1.35 1.35 L4.40 4.25 L7.45 1.35" fill="none" stroke="#363636" stroke-width="1.15"/></svg><span class="t" id="t55" style="left:1728.0px;top:138.1px;font-size:13.5px;color:#5a5a5a;transform:scaleX(0.875);">a</span><span class="t" id="t56" style="left:1737.0px;top:138.1px;font-size:13.5px;color:#8e44ad;transform:scaleX(1.057);">b</span><span class="t" id="t57" style="left:1736.3px;top:148.3px;font-size:13.5px;color:#5a5a5a;transform:scaleX(0.838);">a</span><span class="t" id="t58" style="left:1744.0px;top:148.3px;font-size:13.5px;color:#3b79c4;transform:scaleX(0.886);">c</span><svg class="b" style="left:1727.5px;top:152.5px;" width="8" height="7" viewBox="0 0 8 7"><path d="M1 0.8 Q1 3.6 4 3.6 H6.6 M4.6 1.3 L6.9 3.6 L4.6 5.9" fill="none" stroke="#3b79c4" stroke-width="1.2"/></svg><span class="t" id="t59" style="left:1755.3px;top:143.3px;font-size:17.0px;color:#363636;letter-spacing:-0.37px;">Replace</span><svg class="b" style="left:1732.5px;top:173.0px;" width="15" height="22" viewBox="0 0 15 22"><path d="M1 1 V17.5 L5 13.8 L8 20.6 L10.4 19.5 L7.4 12.8 L12.8 12.5Z" fill="#fff" stroke="#555" stroke-width="1.1"/></svg><span class="t" id="t60" style="left:1755.0px;top:177.5px;font-size:17.0px;color:#363636;letter-spacing:-0.34px;">Select</span><svg class="b" style="left:1808.3px;top:181.4px;" width="8.5" height="5.6" viewBox="0 0 8.5 5.6"><path d="M1.35 1.35 L4.25 4.25 L7.15 1.35" fill="none" stroke="#363636" stroke-width="1.15"/></svg><span class="t" id="t61" style="left:1749.3px;top:213.0px;font-size:15.5px;color:#363636;letter-spacing:0.24px;">Editing</span><div class="b" style="left:1838.0px;top:101.0px;width:1.0px;height:126.0px;background:#c6c6c6;"></div><svg class="b" style="left:1892.0px;top:218.0px;" width="18" height="11" viewBox="0 0 18 11"><path d="M1 10 L9 1.5 L17 10" fill="none" stroke="#444" stroke-width="1.3"/></svg><!-- document area --><div class="b" style="left:0.0px;top:234.7px;width:1920.0px;height:753.0px;background:#e6e6e6;"></div><div class="b" style="left:2.5px;top:235.5px;width:30.5px;height:30.0px;background:#ececec;"></div><div class="b" style="left:4.0px;top:239.0px;width:25.5px;height:23.0px;background:#fcfcfc;"></div><svg class="b" style="left:11.5px;top:248.0px;" width="10" height="10" viewBox="0 0 10 10"><path d="M0 0H3.2V6.2H9.4V9.4H0Z" fill="#6a6a6a"/></svg><div class="b" style="left:364.0px;top:239.0px;width:1198.0px;height:21.0px;background:#fff;"></div><div class="b" style="left:364.0px;top:239.0px;width:141.0px;height:21.0px;background:#c6c6c6;"></div><div class="b" style="left:1420.0px;top:239.0px;width:142.0px;height:21.0px;background:#c6c6c6;"></div><svg class="b" style="left:364.0px;top:239.0px;font-family:Liberation Sans,sans-serif;overflow:visible;" width="1198" height="21" viewBox="0 0 1198 21"><rect x="1.7" y="7.1" width="1.1" height="8.4" fill="#555"/><rect x="15.6" y="9.8" width="1.1" height="3" fill="#555"/><text x="29.7" y="15.9" font-size="13.6" text-anchor="middle" fill="#555">2</text><rect x="43.3" y="9.8" width="1.1" height="3" fill="#555"/><rect x="57.2" y="7.1" width="1.1" height="8.4" fill="#555"/><rect x="71.0" y="9.8" width="1.1" height="3" fill="#555"/><text x="85.1" y="15.9" font-size="13.6" text-anchor="middle" fill="#555">1</text><rect x="98.8" y="9.8" width="1.1" height="3" fill="#555"/><rect x="112.6" y="7.1" width="1.1" height="8.4" fill="#555"/><rect x="126.5" y="9.8" width="1.1" height="3" fill="#555"/><rect x="154.2" y="9.8" width="1.1" height="3" fill="#555"/><rect x="168.1" y="7.1" width="1.1" height="8.4" fill="#555"/><rect x="181.9" y="9.8" width="1.1" height="3" fill="#555"/><text x="196.1" y="15.9" font-size="13.6" text-anchor="middle" fill="#555">1</text><rect x="209.7" y="9.8" width="1.1" height="3" fill="#555"/><rect x="223.5" y="7.1" width="1.1" height="8.4" fill="#555"/><rect x="237.4" y="9.8" width="1.1" height="3" fill="#555"/><text x="251.5" y="15.9" font-size="13.6" text-anchor="middle" fill="#555">2</text><rect x="265.1" y="9.8" width="1.1" height="3" fill="#555"/><rect x="279.0" y="7.1" width="1.1" height="8.4" fill="#555"/><rect x="292.8" y="9.8" width="1.1" height="3" fill="#555"/><text x="306.9" y="15.9" font-size="13.6" text-anchor="middle" fill="#555">3</text><rect x="320.6" y="9.8" width="1.1" height="3" fill="#555"/><rect x="334.4" y="7.1" width="1.1" height="8.4" fill="#555"/><rect x="348.3" y="9.8" width="1.1" height="3" fill="#555"/><text x="362.4" y="15.9" font-size="13.6" text-anchor="middle" fill="#555">4</text><rect x="376.0" y="9.8" width="1.1" height="3" fill="#555"/><rect x="389.9" y="7.1" width="1.1" height="8.4" fill="#555"/><rect x="403.7" y="9.8" width="1.1" height="3" fill="#555"/><text x="417.8" y="15.9" font-size="13.6" text-anchor="middle" fill="#555">5</text><rect x="431.5" y="9.8" width="1.1" height="3" fill="#555"/><rect x="445.3" y="7.1" width="1.1" height="8.4" fill="#555"/><rect x="459.2" y="9.8" width="1.1" height="3" fill="#555"/><text x="473.3" y="15.9" font-size="13.6" text-anchor="middle" fill="#555">6</text><rect x="486.9" y="9.8" width="1.1" height="3" fill="#555"/><rect x="500.8" y="7.1" width="1.1" height="8.4" fill="#555"/><rect x="514.6" y="9.8" width="1.1" height="3" fill="#555"/><text x="528.8" y="15.9" font-size="13.6" text-anchor="middle" fill="#555">7</text><rect x="542.4" y="9.8" width="1.1" height="3" fill="#555"/><rect x="556.2" y="7.1" width="1.1" height="8.4" fill="#555"/><rect x="570.1" y="9.8" width="1.1" height="3" fill="#555"/><text x="584.2" y="15.9" font-size="13.6" text-anchor="middle" fill="#555">8</text><rect x="597.8" y="9.8" width="1.1" height="3" fill="#555"/><rect x="611.7" y="7.1" width="1.1" height="8.4" fill="#555"/><rect x="625.5" y="9.8" width="1.1" height="3" fill="#555"/><text x="639.7" y="15.9" font-size="13.6" text-anchor="middle" fill="#555">9</text><rect x="653.3" y="9.8" width="1.1" height="3" fill="#555"/><rect x="667.1" y="7.1" width="1.1" height="8.4" fill="#555"/><rect x="681.0" y="9.8" width="1.1" height="3" fill="#555"/><text x="695.1" y="15.9" font-size="13.6" text-anchor="middle" fill="#555">10</text><rect x="708.7" y="9.8" width="1.1" height="3" fill="#555"/><rect x="722.6" y="7.1" width="1.1" height="8.4" fill="#555"/><rect x="736.4" y="9.8" width="1.1" height="3" fill="#555"/><text x="750.5" y="15.9" font-size="13.6" text-anchor="middle" fill="#555">11</text><rect x="764.2" y="9.8" width="1.1" height="3" fill="#555"/><rect x="778.0" y="7.1" width="1.1" height="8.4" fill="#555"/><rect x="791.9" y="9.8" width="1.1" height="3" fill="#555"/><text x="806.0" y="15.9" font-size="13.6" text-anchor="middle" fill="#555">12</text><rect x="819.6" y="9.8" width="1.1" height="3" fill="#555"/><rect x="833.5" y="7.1" width="1.1" height="8.4" fill="#555"/><rect x="847.3" y="9.8" width="1.1" height="3" fill="#555"/><text x="861.5" y="15.9" font-size="13.6" text-anchor="middle" fill="#555">13</text><rect x="875.1" y="9.8" width="1.1" height="3" fill="#555"/><rect x="888.9" y="7.1" width="1.1" height="8.4" fill="#555"/><rect x="902.8" y="9.8" width="1.1" height="3" fill="#555"/><text x="916.9" y="15.9" font-size="13.6" text-anchor="middle" fill="#555">14</text><rect x="930.5" y="9.8" width="1.1" height="3" fill="#555"/><rect x="944.4" y="7.1" width="1.1" height="8.4" fill="#555"/><rect x="958.2" y="9.8" width="1.1" height="3" fill="#555"/><text x="972.4" y="15.9" font-size="13.6" text-anchor="middle" fill="#555">15</text><rect x="986.0" y="9.8" width="1.1" height="3" fill="#555"/><rect x="999.8" y="7.1" width="1.1" height="8.4" fill="#555"/><rect x="1013.7" y="9.8" width="1.1" height="3" fill="#555"/><text x="1027.8" y="15.9" font-size="13.6" text-anchor="middle" fill="#555">16</text><rect x="1041.4" y="9.8" width="1.1" height="3" fill="#555"/><rect x="1055.3" y="7.1" width="1.1" height="8.4" fill="#555"/><rect x="1069.1" y="9.8" width="1.1" height="3" fill="#555"/><text x="1083.3" y="15.9" font-size="13.6" text-anchor="middle" fill="#555">17</text><rect x="1096.9" y="9.8" width="1.1" height="3" fill="#555"/><rect x="1110.7" y="7.1" width="1.1" height="8.4" fill="#555"/><rect x="1124.6" y="9.8" width="1.1" height="3" fill="#555"/><text x="1138.7" y="15.9" font-size="13.6" text-anchor="middle" fill="#555">18</text><rect x="1152.3" y="9.8" width="1.1" height="3" fill="#555"/><rect x="1166.2" y="7.1" width="1.1" height="8.4" fill="#555"/><rect x="1180.0" y="9.8" width="1.1" height="3" fill="#555"/><text x="1194.1" y="15.9" font-size="13.6" text-anchor="middle" fill="#555">19</text></svg><svg class="b" style="left:498.5px;top:236.0px;" width="14" height="33" viewBox="0 0 14 33"><path d="M1 0.5H13V5.5L7 11.5L1 5.5Z" fill="#fff" stroke="#aaa" stroke-width="1"/>
<path d="M7 14.5 L13 20.5 V25.5 H1 V20.5Z" fill="#fff" stroke="#aaa" stroke-width="1"/><rect x="1" y="25.5" width="12" height="6.5" fill="#fff" stroke="#aaa" stroke-width="1"/></svg><svg class="b" style="left:1414.6px;top:251.3px;" width="14" height="12" viewBox="0 0 14 12"><path d="M7 0.8 L13 6.5 V11.5 H1 V6.5Z" fill="#fff" stroke="#bbb" stroke-width="1"/></svg><div class="b" style="left:365.0px;top:294.0px;width:1198.0px;height:694.0px;background:#fff;border:1px solid #c8c8c8;border-bottom:none;"></div><div class="b" style="left:5.0px;top:293.0px;width:21.7px;height:695.0px;background:#fff;"></div><div class="b" style="left:5.0px;top:293.0px;width:21.7px;height:143.0px;background:#c6c6c6;"></div><svg class="b" style="left:5.0px;top:293.0px;font-family:Liberation Sans,sans-serif;" width="21.7" height="695" viewBox="0 0 21.7 695"><text transform="translate(17.0 31.4) rotate(-90)" x="0" y="0" font-size="13.6" text-anchor="middle" fill="#555">2</text><rect x="11.5" y="44.8" width="3.6" height="1" fill="#555"/><rect x="9.5" y="58.6" width="7.6" height="1" fill="#555"/><rect x="11.5" y="72.5" width="3.6" height="1" fill="#555"/><text transform="translate(17.0 86.9) rotate(-90)" x="0" y="0" font-size="13.6" text-anchor="middle" fill="#555">1</text><rect x="11.5" y="100.2" width="3.6" height="1" fill="#555"/><rect x="9.5" y="114.1" width="7.6" height="1" fill="#555"/><rect x="11.5" y="127.9" width="3.6" height="1" fill="#555"/><rect x="11.5" y="155.7" width="3.6" height="1" fill="#555"/><rect x="9.5" y="169.5" width="7.6" height="1" fill="#555"/><rect x="11.5" y="183.4" width="3.6" height="1" fill="#555"/><text transform="translate(17.0 197.8) rotate(-90)" x="0" y="0" font-size="13.6" text-anchor="middle" fill="#555">1</text><rect x="11.5" y="211.1" width="3.6" height="1" fill="#555"/><rect x="9.5" y="225.0" width="7.6" height="1" fill="#555"/><rect x="11.5" y="238.8" width="3.6" height="1" fill="#555"/><text transform="translate(17.0 253.2) rotate(-90)" x="0" y="0" font-size="13.6" text-anchor="middle" fill="#555">2</text><rect x="11.5" y="266.6" width="3.6" height="1" fill="#555"/><rect x="9.5" y="280.4" width="7.6" height="1" fill="#555"/><rect x="11.5" y="294.3" width="3.6" height="1" fill="#555"/><text transform="translate(17.0 308.7) rotate(-90)" x="0" y="0" font-size="13.6" text-anchor="middle" fill="#555">3</text><rect x="11.5" y="322.0" width="3.6" height="1" fill="#555"/><rect x="9.5" y="335.9" width="7.6" height="1" fill="#555"/><rect x="11.5" y="349.7" width="3.6" height="1" fill="#555"/><text transform="translate(17.0 364.1) rotate(-90)" x="0" y="0" font-size="13.6" text-anchor="middle" fill="#555">4</text><rect x="11.5" y="377.5" width="3.6" height="1" fill="#555"/><rect x="9.5" y="391.3" width="7.6" height="1" fill="#555"/><rect x="11.5" y="405.2" width="3.6" height="1" fill="#555"/><text transform="translate(17.0 419.5) rotate(-90)" x="0" y="0" font-size="13.6" text-anchor="middle" fill="#555">5</text><rect x="11.5" y="432.9" width="3.6" height="1" fill="#555"/><rect x="9.5" y="446.8" width="7.6" height="1" fill="#555"/><rect x="11.5" y="460.6" width="3.6" height="1" fill="#555"/><text transform="translate(17.0 475.0) rotate(-90)" x="0" y="0" font-size="13.6" text-anchor="middle" fill="#555">6</text><rect x="11.5" y="488.4" width="3.6" height="1" fill="#555"/><rect x="9.5" y="502.2" width="7.6" height="1" fill="#555"/><rect x="11.5" y="516.1" width="3.6" height="1" fill="#555"/><text transform="translate(17.0 530.5) rotate(-90)" x="0" y="0" font-size="13.6" text-anchor="middle" fill="#555">7</text><rect x="11.5" y="543.8" width="3.6" height="1" fill="#555"/><rect x="9.5" y="557.7" width="7.6" height="1" fill="#555"/><rect x="11.5" y="571.5" width="3.6" height="1" fill="#555"/><text transform="translate(17.0 585.9) rotate(-90)" x="0" y="0" font-size="13.6" text-anchor="middle" fill="#555">8</text><rect x="11.5" y="599.3" width="3.6" height="1" fill="#555"/><rect x="9.5" y="613.1" width="7.6" height="1" fill="#555"/><rect x="11.5" y="627.0" width="3.6" height="1" fill="#555"/><text transform="translate(17.0 641.4) rotate(-90)" x="0" y="0" font-size="13.6" text-anchor="middle" fill="#555">9</text><rect x="11.5" y="654.7" width="3.6" height="1" fill="#555"/><rect x="9.5" y="668.6" width="7.6" height="1" fill="#555"/><rect x="11.5" y="682.4" width="3.6" height="1" fill="#555"/><text transform="translate(17.0 696.8) rotate(-90)" x="0" y="0" font-size="13.6" text-anchor="middle" fill="#555">10</text></svg><div class="b" style="left:506.2px;top:435.0px;width:922.8px;height:97.0px;background:#c8c8c8;"></div><div class="b" style="left:506.2px;top:531.5px;width:644.8px;height:42.0px;background:#c8c8c8;"></div><div class="b" style="left:506.2px;top:573.0px;width:922.8px;height:138.5px;background:#c8c8c8;"></div><div class="b" style="left:506.2px;top:711.0px;width:927.8px;height:40.0px;background:#c8c8c8;"></div><div class="b" style="left:549.0px;top:751.0px;width:12.0px;height:54.0px;background:#c8c8c8;"></div><div class="p" id="p0" style="left:506.2px;top:456.4px;font-size:25.50px;line-height:41px;height:41px;word-spacing:-0.280px;">Dọc theo hai bên bờ sông là hai hàng cây xanh tươi đang rì rào trong gió. Nước sông đang</div><div class="p" id="p1" style="left:506.2px;top:497.4px;font-size:25.50px;line-height:41px;height:41px;word-spacing:-0.558px;">lững lờ&#x27; đưa dòng về biển cả. Thỉnh thoảng, những chiếc lá trôi theo dòng nước như những</div><div class="p" id="p2" style="left:506.2px;top:538.4px;font-size:25.50px;line-height:41px;height:41px;">con thuyền bé nhỏ đang dập dềnh trên sóng nước mênh mông.</div><div class="p" id="p3" style="left:506.2px;top:594.4px;font-size:25.50px;line-height:41px;height:41px;word-spacing:1.106px;">Xa xa, sau khúc quanh co của dòng sông, những con thuyền đang kéo lưới, tiếng gõ cộc</div><div class="p" id="p4" style="left:506.2px;top:635.4px;font-size:25.50px;line-height:41px;height:41px;word-spacing:0.514px;">cộc vào mạn thuyền, tiếng cá quẫy tùng toẵng, tiếng nói cười ríu rít, ... Tất cả đã làm cho</div><div class="p" id="p5" style="left:506.2px;top:676.4px;font-size:25.50px;line-height:41px;height:41px;word-spacing:0.070px;">dòng sông quê em trở nên nhộn nhịp đến lạ thường. Dòng sông quê em đã gắn bó với bao</div><div class="p" id="p6" style="left:506.2px;top:717.4px;font-size:25.50px;line-height:41px;height:41px;word-spacing:-0.958px;">người dân ở đây rất thân thương. Sông gắn bó với tuổi thơ của em. Em yêu sông nhiều lắm.</div><div class="b" style="left:1894.0px;top:270.0px;width:25.0px;height:717.5px;background:#dbdbdb;"></div><div class="b" style="left:1894.0px;top:270.0px;width:25.0px;height:24.7px;background:#fff;border:1px solid #ababab;"></div><svg class="b" style="left:1901.0px;top:278.5px;" width="11" height="6.5" viewBox="0 0 11 6.5"><path d="M0 6.5H11L5.5 0Z" fill="#606060"/></svg><div class="b" style="left:1894.0px;top:294.0px;width:25.0px;height:298.7px;background:#fff;border:1px solid #ababab;"></div><div class="b" style="left:1894.0px;top:961.5px;width:25.0px;height:24.5px;background:#fff;border:1px solid #ababab;"></div><svg class="b" style="left:1901.0px;top:970.5px;" width="11" height="6.5" viewBox="0 0 11 6.5"><path d="M0 0H11L5.5 6.5Z" fill="#606060"/></svg><div class="b" style="left:72.0px;top:38.0px;width:121.0px;height:74.5px;border:5px solid #fe0000;"></div><div class="b" style="left:608.1px;top:194.1px;width:82.6px;height:54.4px;border:5px solid #fe0000;"></div><div class="b" style="left:475.0px;top:399.2px;width:981.3px;height:420.8px;border:5px solid #fe0000;"></div><span class="t" id="t62" style="left:194.9px;top:91.0px;font-size:122.0px;color:#fe0000;font-weight:700;transform:scaleX(0.973);">2</span><span class="t" id="t63" style="left:686.2px;top:233.7px;font-size:123.2px;color:#fe0000;font-weight:700;transform:scaleX(0.954);">3</span><span class="t" id="t64" style="left:1455.1px;top:338.8px;font-size:121.0px;color:#fe0000;font-weight:700;transform:scaleX(0.956);">1</span><div class="b" style="left:1458.0px;top:428.3px;width:24.2px;height:14.0px;background:#fff;"></div><div class="b" style="left:1497.8px;top:428.3px;width:21.0px;height:14.0px;background:#fff;"></div><!-- status bar --><div class="b" style="left:0.0px;top:987.0px;width:1920.0px;height:33.0px;background:#f3f3f3;border-top:1px solid #cfcfcf;"></div><span class="t" id="t65" style="left:11.0px;top:996.6px;font-size:15.0px;color:#444;letter-spacing:0.06px;">Page 1 of 1</span><span class="t" id="t66" style="left:115.4px;top:996.6px;font-size:15.0px;color:#444;transform:scaleX(1.065);">128 of 128 words</span><svg class="b" style="left:265.0px;top:995.0px;" width="22" height="18" viewBox="0 0 22 18"><path d="M1 1.5H8.5Q10 1.5 10 3V16.5Q10 15 8.5 15H1Z M10 3Q10 1.5 11.5 1.5H14 M10 16.5Q10 15 11.5 15H19V10" fill="none" stroke="#666" stroke-width="1.1"/><path d="M12.5 6.5 L15 9.5 L20.5 2" fill="none" stroke="#666" stroke-width="1.5"/></svg><span class="t" id="t67" style="left:311.3px;top:996.6px;font-size:15.0px;color:#444;letter-spacing:0.04px;">English (United States)</span><svg class="b" style="left:493.0px;top:994.0px;" width="22" height="19" viewBox="0 0 22 19"><circle cx="5" cy="4.5" r="4.2" fill="#666"/><path d="M10 2.5H20.5V18H3V10" fill="none" stroke="#666" stroke-width="1.2"/><path d="M10 5.5H20.5" stroke="#666" stroke-width="2"/><path d="M5.5 10.5H18.5 M5.5 13H18.5 M5.5 15.5H18.5" stroke="#666" stroke-width="1.1" stroke-dasharray="2.6 1.2"/></svg><svg class="b" style="left:1496.0px;top:995.0px;" width="19.5" height="18" viewBox="0 0 19.5 18"><path d="M0.6 1H8.8V17H0.6Z M10.6 1H18.8V17H10.6Z" fill="none" stroke="#666" stroke-width="1.1"/><path d="M2.5 4H7 M2.5 6.5H7 M2.5 9H7 M2.5 11.5H7 M2.5 14H7 M12.5 4H17 M12.5 6.5H17 M12.5 9H17 M12.5 11.5H17 M12.5 14H17" stroke="#666" stroke-width="1"/></svg><div class="b" style="left:1535.0px;top:988.0px;width:60.0px;height:32.0px;background:#c6c6c6;"></div><svg class="b" style="left:1555.5px;top:995.0px;" width="20" height="18" viewBox="0 0 20 18"><path d="M0.6 0.6H19V17.4H0.6Z" fill="none" stroke="#555" stroke-width="1.1"/><path d="M3 4H16.5 M3 6.5H16.5 M3 9H16.5 M3 11.5H16.5 M3 14H16.5" stroke="#555" stroke-width="1"/></svg><svg class="b" style="left:1616.0px;top:994.0px;" width="22" height="20" viewBox="0 0 22 20"><path d="M0.6 0.6H16.5V9 M0.6 0.6V17H9" fill="none" stroke="#666" stroke-width="1.1"/><path d="M3 4H14 M3 6.5H14 M3 9H10 M3 11.5H9" stroke="#666" stroke-width="1"/><circle cx="15" cy="14" r="5.2" fill="#666"/><path d="M12 12 Q15 10.5 17.5 12.5 Q15.5 14 16.5 17" fill="none" stroke="#f3f3f3" stroke-width="1"/></svg><div class="b" style="left:1662.5px;top:1003.0px;width:12.5px;height:1.3px;background:#555;"></div><div class="b" style="left:1683.5px;top:1002.6px;width:147.5px;height:2.0px;background:#2a2a2a;"></div><div class="b" style="left:1751.6px;top:994.6px;width:8.2px;height:17.4px;background:#6a6a6a;"></div><div class="b" style="left:1839.0px;top:1003.0px;width:12.0px;height:1.3px;background:#555;"></div><div class="b" style="left:1844.4px;top:997.5px;width:1.3px;height:12.0px;background:#555;"></div><span class="t" id="t68" style="left:1868.5px;top:996.3px;font-size:15.0px;color:#444;transform:scaleX(1.061);">98%</span><!-- taskbar --><div class="b" style="left:0.0px;top:1020.0px;width:1920.0px;height:60.0px;background:linear-gradient(90deg,#625f43 0,#636148 600px,#615f46 1100px,#5d5c44 1400px,#5a5a42 1920px);"></div><svg class="b" style="left:24.0px;top:1037.3px;" width="25" height="25" viewBox="0 0 25 25"><path d="M0 3.5 L10.3 2 V11.8 H0Z M11.6 1.8 L24.5 0 V11.8 H11.6Z M0 13.1 H10.3 V22.9 L0 21.4Z M11.6 13.1 H24.5 V24.9 L11.6 23.1Z" fill="#fff"/></svg><div class="b" style="left:72.3px;top:1020.3px;width:515.0px;height:59.7px;background:#68745a;border:1.6px solid #87917a;"></div><svg class="b" style="left:90.0px;top:1039.0px;" width="25" height="23" viewBox="0 0 25 23"><circle cx="15.5" cy="8.5" r="7.2" fill="none" stroke="#fff" stroke-width="1.6"/><path d="M10.5 14 L1 23" stroke="#fff" stroke-width="1.8"/></svg><span class="t" id="t69" style="left:132.0px;top:1042.0px;font-size:22.5px;color:#f1f1ee;letter-spacing:-0.06px;">Type here to search</span><svg class="b" style="left:611.5px;top:1037.3px;" width="25" height="25" viewBox="0 0 25 25"><circle cx="12.5" cy="12.5" r="10.3" fill="none" stroke="#fff" stroke-width="2.8"/></svg><svg class="b" style="left:683.5px;top:1037.5px;" width="25" height="24" viewBox="0 0 25 24"><path d="M1 5.5H15.5V18H1Z" fill="none" stroke="#fff" stroke-width="1.5"/><path d="M0.5 1H16 M0.5 22.8H16 M22 0.5V23" stroke="#fff" stroke-width="1.5"/><rect x="20.3" y="7.5" width="3.4" height="3.4" fill="#fff"/></svg><div class="b" style="left:742.9px;top:1077.2px;width:58.0px;height:3.0px;background:#a9d08e;"></div><div class="b" style="left:815.0px;top:1077.2px;width:58.0px;height:3.0px;background:#a9d08e;"></div><div class="b" style="left:886.9px;top:1077.2px;width:58.0px;height:3.0px;background:#a9d08e;"></div><div class="b" style="left:958.6px;top:1077.2px;width:58.0px;height:3.0px;background:#a9d08e;"></div><div class="b" style="left:1031.0px;top:1077.2px;width:58.0px;height:3.0px;background:#a9d08e;"></div><div class="b" style="left:1173.2px;top:1077.2px;width:58.0px;height:3.0px;background:#a9d08e;"></div><div class="b" style="left:1244.8px;top:1077.2px;width:58.0px;height:3.0px;background:#a9d08e;"></div><div class="b" style="left:755.0px;top:1032.3px;width:33.4px;height:31.8px;background:#0a1f2c;border:2.7px solid #2ccbff;border-radius:6px;"></div><span class="t" id="t70" style="left:762.1px;top:1038.3px;font-size:21.5px;color:#e6f5ff;transform:scaleX(0.788);">Ps</span><svg class="b" style="left:825.5px;top:1031.5px;" width="37.5" height="37" viewBox="0 0 37.5 37"><path d="M12 0.8 H26 Q36.6 0.8 36.6 11.5 V22.5 Q36.6 33.3 26 33.3 H13 Q10 33.3 7.5 35 Q5 36.6 3 36.3 Q4.5 34 4.2 31 Q0.8 27 0.8 21 V12 Q0.8 0.8 12 0.8Z" fill="#0f6cf7"/><path d="M15 0.8 H26 Q36.6 0.8 36.6 11.5 V21 Q36.6 31.6 26 31.6 H15.5 Q12.5 31.6 10.5 32.6 Q8.8 33.4 7.6 32.8 Q8.6 30.5 7.8 28 Q4.5 24 4.5 18.5 V12 Q4.5 0.8 15 0.8Z" fill="#fff"/><text x="20.6" y="20.9" font-size="11.6" font-weight="700" text-anchor="middle" fill="#0f6cf7" textLength="25.5" lengthAdjust="spacingAndGlyphs" font-family="Liberation Sans, sans-serif">Zalo</text></svg><svg class="b" style="left:899.5px;top:1036.5px;" width="33.5" height="27.5" viewBox="0 0 33.5 27.5"><path d="M0.5 2.6 Q0.5 0.7 2.4 0.7 H12.6 Q14 0.7 14.6 1.9 L15.4 3.2 H0.5Z" fill="#e6a417"/><path d="M0.5 3.2 H15.4 L16.6 2.7 H31 Q32.6 2.7 32.6 4.3 V23.4 Q32.6 25 31 25 H2.1 Q0.5 25 0.5 23.4Z" fill="#fbd669"/><path d="M0.5 18 H32.6 V23.4 Q32.6 25 31 25 H2.1 Q0.5 25 0.5 23.4Z" fill="#f5c84c"/><path d="M5.7 26.6 V16 Q5.7 14.4 7.3 14.4 H25.4 Q27 14.4 27 16 V26.6 H21.6 V19.4 H11 V26.6Z" fill="#3d92e4"/></svg><svg class="b" style="left:970.0px;top:1031.8px;" width="36.2" height="36.4" viewBox="0 0 36.2 36.4"><defs><linearGradient id="eg1" x1="0.1" y1="0.1" x2="1" y2="0.65"><stop offset="0" stop-color="#2aa2ea"/><stop offset="0.5" stop-color="#2dc3b2"/><stop offset="1" stop-color="#66da4a"/></linearGradient>
<linearGradient id="eg2" x1="0" y1="0" x2="0.8" y2="1"><stop offset="0" stop-color="#219fe9"/><stop offset="1" stop-color="#1668c6"/></linearGradient></defs>
<circle cx="18.1" cy="18.2" r="18" fill="url(#eg1)"/>
<path d="M0.3 15 Q5 8.5 13 9.5 Q9 13 9 19 Q9.5 28 19 33 Q27 35 33.5 27.5 Q30 33.5 22 35.8 A18 18 0 0 1 0.3 15Z" fill="url(#eg2)"/>
<path d="M13 9.5 Q9 13 9 19 Q9.5 28 19 33 Q27.5 34.5 33.5 27.3 Q28 30 22 28 Q15 25 15.5 18 Q15.8 14 19 13 Q16 10 13 9.5Z" fill="#1458b0"/>
<path d="M15.5 18 Q15.8 13.5 20 13.3 Q24.2 13.8 24.2 18 Q24 20 22.6 21.2 Q22 23 25 23.6 Q30 24.4 35.4 22 Q35 25 33.5 27.3 Q28 30 22 28 Q15 25 15.5 18Z" fill="#626047"/></svg><svg class="b" style="left:1041.8px;top:1032.0px;" width="36.4" height="36" viewBox="0 0 36.4 36"><path d="M0 0 H28.4 L36.3 7.9 V36 H0Z" fill="#f58c20"/><path d="M28.4 0 V7.9 H36.3Z" fill="#fbc789"/><path d="M6 24 L17.5 12 L29 24 L17.5 34Z" fill="#f7a045" opacity="0.7"/><circle cx="17.6" cy="16.4" r="9.6" fill="#fff"/><path d="M12.6 20.5 Q11 13 17.5 10.2 Q22 8.8 25.6 11.2 Q21 10.8 19.4 13.6 Q22.4 13.6 24.6 16.2 Q23.8 22.6 17.4 23.4 Q14 23.2 12.6 20.5Z" fill="#f58c20"/><path d="M16.5 17 Q19 15 21.6 17.2 Q20.6 20.8 17.2 20.6Z" fill="#fff"/><text x="18.7" y="32.9" font-size="8" font-weight="700" text-anchor="middle" fill="#fff" textLength="15.5" lengthAdjust="spacingAndGlyphs" font-family="Liberation Sans, sans-serif">PDF</text></svg><div class="b" style="left:1097.2px;top:1020.0px;width:68.5px;height:60.0px;background:#b27428;"></div><div class="b" style="left:1159.3px;top:1020.0px;width:1.2px;height:60.0px;background:#a2651c;"></div><div class="b" style="left:1097.2px;top:1077.2px;width:68.5px;height:3.0px;background:#ff7a1a;"></div><svg class="b" style="left:1114.0px;top:1033.5px;" width="32" height="32" viewBox="0 0 32 32"><defs><linearGradient id="sn" x1="0" y1="0" x2="0.3" y2="1"><stop offset="0" stop-color="#ffda06"/><stop offset="1" stop-color="#f9bb12"/></linearGradient></defs><rect x="0.3" y="0.5" width="31.4" height="31.2" rx="1.6" fill="url(#sn)"/><path d="M16.8 17 H31.2 L17 31.2 Q16.8 24 16.8 17Z" fill="#3c3a3a"/><path d="M31.7 17.5 V30 Q31.7 31.7 30 31.7 H17.5Z" fill="#f3b416"/></svg><svg class="b" style="left:1185.0px;top:1033.0px;" width="33" height="33" viewBox="0 0 33 33"><circle cx="16.5" cy="16.5" r="16.3" fill="#1ed760"/><path d="M7 11.5 Q17 8.5 26.5 13.5" fill="none" stroke="#191414" stroke-width="3.1" stroke-linecap="round"/><path d="M8 17 Q17 14.5 25 18.5" fill="none" stroke="#191414" stroke-width="2.6" stroke-linecap="round"/><path d="M9 22 Q16.5 20 23.5 23.3" fill="none" stroke="#191414" stroke-width="2.1" stroke-linecap="round"/></svg><svg class="b" style="left:1255.0px;top:1032.0px;" width="36" height="36" viewBox="0 0 36 36"><rect x="0" y="0" width="36" height="36" rx="4" fill="#00b900"/><path d="M18 6.5 Q30.5 7 31 15.5 Q30.5 22 19.5 29.5 Q18 30.5 18.3 28 Q18.6 26 17 25.5 Q5.5 24.5 5 15.5 Q5.5 7 18 6.5Z" fill="#fff"/><text x="18" y="19.3" font-size="8.3" font-weight="700" text-anchor="middle" fill="#00b900" font-family="Liberation Sans, sans-serif">LINE</text></svg><div class="b" style="left:1309.8px;top:1020.0px;width:69.2px;height:60.0px;background:#667451;"></div><div class="b" style="left:1309.8px;top:1077.2px;width:69.2px;height:3.0px;background:#a9d08e;"></div><svg class="b" style="left:1326.0px;top:1033.5px;" width="36" height="32" viewBox="0 0 36 32"><path d="M9 0.5 H33.5 Q35.5 0.5 35.5 2.5 V8.5 H9Z" fill="#41a5ee"/><rect x="9" y="8.5" width="26.5" height="8" fill="#2b7cd3"/><rect x="9" y="16.5" width="26.5" height="8" fill="#185abd"/><path d="M9 24.5 H35.5 V29.5 Q35.5 31.5 33.5 31.5 H9Z" fill="#103f91"/><rect x="0.5" y="7.5" width="18.5" height="18.5" rx="1.8" fill="#185abd"/><text x="9.8" y="22.3" font-size="13.5" font-weight="700" text-anchor="middle" fill="#fff" font-family="Liberation Sans, sans-serif">W</text></svg><svg class="b" style="left:1423.0px;top:1034.0px;" width="34" height="33" viewBox="0 0 34 33"><defs><linearGradient id="wc" x1="0" y1="0" x2="1" y2="0.3"><stop offset="0" stop-color="#c4e5fb"/><stop offset="0.55" stop-color="#b9defa"/><stop offset="1" stop-color="#e8f1f8"/></linearGradient></defs><path d="M7 21.5 Q0.5 21 0.5 15 Q1 9.5 7 9.5 Q8 2.5 15.5 2.3 Q21 2.5 22.5 7.5 Q27 6 30 10 Q33 15 30.5 19 Q28.5 21.5 25 21.5Z" fill="url(#wc)"/><path d="M20 8.5 Q24 5.8 28 8 Q32 11 31 16 Q29.5 21 24 21 H18 Q14 17 16 12 Q17.5 9 20 8.5Z" fill="#e9f2f9" opacity="0.85"/><path d="M9.6 23.6 Q12.6 28.5 12.3 29.8 Q11.8 31.8 9.6 31.8 Q7.3 31.8 6.9 29.8 Q6.6 28.5 9.6 23.6Z M16.2 16.6 Q19.2 21.5 18.9 22.8 Q18.4 24.6 16.2 24.6 Q13.9 24.6 13.5 22.8 Q13.2 21.5 16.2 16.6Z M23.7 21.7 Q26.3 25.5 26 26.6 Q25.6 28 23.7 28 Q21.8 28 21.4 26.6 Q21.1 25.5 23.7 21.7Z" fill="#5fb4ff"/></svg><span class="t" id="t71" style="left:1470.7px;top:1041.8px;font-size:21.0px;color:#fff;transform:scaleX(0.898);">75°F</span><svg class="b" style="left:1537.0px;top:1044.0px;" width="19" height="11" viewBox="0 0 19 11"><path d="M1 10 L9.5 1.3 L18 10" fill="none" stroke="#fff" stroke-width="1.5"/></svg><svg class="b" style="left:1573.0px;top:1041.5px;" width="21" height="19.5" viewBox="0 0 21 19.5"><circle cx="17.2" cy="17" r="1.6" fill="#fff"/><path d="M11 18.5 A6.5 6.5 0 0 1 17.5 11.5" fill="none" stroke="#fff" stroke-width="1.3"/><path d="M6 18.5 A11.5 11.5 0 0 1 18.5 6.5" fill="none" stroke="#fff" stroke-width="1.3"/><path d="M1 18.5 A16.5 16.5 0 0 1 19.5 1.5" fill="none" stroke="#bbb" stroke-width="1.3"/></svg><svg class="b" style="left:1607.0px;top:1040.5px;" width="23" height="19" viewBox="0 0 23 19"><path d="M1 6.5H5L10.5 1V18L5 12.5H1Z" fill="none" stroke="#fff" stroke-width="1.3"/><path d="M13.5 6.5 Q16 9.5 13.5 12.5" fill="none" stroke="#fff" stroke-width="1.2"/><path d="M16.5 4 Q20.5 9.5 16.5 15" fill="none" stroke="#fff" stroke-width="1.2"/><path d="M19.5 1.5 Q25 9.5 19.5 17.5" fill="none" stroke="#aaa" stroke-width="1.1"/></svg><svg class="b" style="left:1641.5px;top:1041.5px;" width="26" height="16" viewBox="0 0 26 16"><rect x="7" y="3.5" width="16" height="10.5" fill="#fff" stroke="#fff" stroke-width="1.4"/><rect x="23.7" y="6.5" width="1.8" height="4.5" fill="#fff"/><path d="M2.5 0.5V4 M5.5 0.5V4 M1 4H7V7Q7 9.5 4 9.5Q1 9.5 1 7Z M4 9.5V13.5H7" fill="none" stroke="#fff" stroke-width="1.2"/></svg><span class="t" id="t72" style="left:1681.1px;top:1041.6px;font-size:18.0px;color:#fff;transform:scaleX(0.905);">ENG</span><span class="t" id="t73" style="left:1750.0px;top:1028.5px;font-size:17.5px;color:#fff;letter-spacing:-0.03px;">1:01 PM</span><span class="t" id="t74" style="left:1736.3px;top:1056.1px;font-size:17.5px;color:#fff;transform:scaleX(1.065);">05/10/2021</span><svg class="b" style="left:1857.5px;top:1037.5px;" width="25" height="25" viewBox="0 0 25 25"><path d="M1 1H24V18H16.5L12.5 23L8.5 18H1Z" fill="none" stroke="#fff" stroke-width="1.4"/></svg><div class="b" style="left:1912.5px;top:1020.0px;width:1.0px;height:60.0px;background:#8a8a78;"></div>
</body></html>
